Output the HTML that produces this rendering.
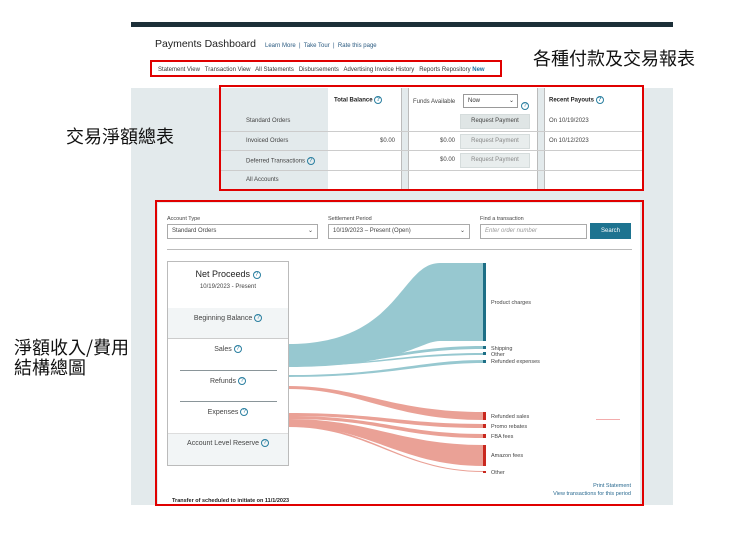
<!DOCTYPE html>
<html><head><meta charset="utf-8"><style>
*{margin:0;padding:0;box-sizing:border-box}
body{width:740px;height:543px;background:#fff;position:relative;overflow:hidden;font-family:"Liberation Sans","Noto Sans CJK TC",sans-serif;color:#333}
.a{position:absolute}
.t{font-size:6px;color:#444;white-space:nowrap}
.cjk{font-family:"Noto Sans CJK TC",sans-serif;font-size:18px;color:#111;position:absolute;white-space:nowrap;line-height:1.1}
.red{position:absolute;border:2px solid #e00000}
.q{display:inline-block;width:8px;height:8px;border:1px solid #2a7fa0;border-radius:50%;font-size:6px;line-height:6px;text-align:center;color:#2a7fa0;vertical-align:middle}
.btn{position:absolute;background:#e8eded;border:1px solid #d5dcdc;font-size:6px;color:#888;text-align:center;line-height:13px}
</style></head><body>
<div class="a" style="left:131px;top:22px;width:542px;height:5px;background:#1c2f38"></div>
<div class="a" style="left:131px;top:27px;width:542px;height:61px;background:#fff"></div>
<div class="a" style="left:131px;top:88px;width:542px;height:417px;background:#e3eaec"></div>
<div class="a" style="left:155px;top:38px;font-size:10.5px;color:#222">Payments Dashboard</div>
<div class="a t" style="left:265px;top:43px;color:#2a5a80">Learn More &nbsp;|&nbsp; Take Tour &nbsp;|&nbsp; Rate this page</div>
<div class="a t" style="left:158px;top:67px;color:#333">Statement View &nbsp; Transaction View &nbsp; All Statements &nbsp; Disbursements &nbsp; Advertising Invoice History &nbsp; Reports Repository <b style="color:#1a6fa0">New</b></div>
<div class="red" style="left:150px;top:60px;width:352px;height:17px"></div>
<div class="cjk" style="left:533px;top:49px">各種付款及交易報表</div>
<div class="cjk" style="left:66px;top:127px">交易淨額總表</div>
<div class="cjk" style="left:14px;top:338px">淨額收入/費用<br>結構總圖</div>
<div class="a" style="left:328px;top:88px;width:74px;height:102px;background:#fff;border-right:1px solid #bbb"></div>
<div class="a" style="left:408px;top:88px;width:130px;height:102px;background:#fff;border-left:1px solid #bbb;border-right:1px solid #bbb"></div>
<div class="a" style="left:544px;top:88px;width:99px;height:102px;background:#fff;border-left:1px solid #bbb"></div>
<div class="a" style="left:220px;top:131px;width:423px;height:1px;background:#ccc"></div>
<div class="a" style="left:220px;top:150px;width:423px;height:1px;background:#ccc"></div>
<div class="a" style="left:220px;top:170px;width:423px;height:1px;background:#ccc"></div>
<div class="a t" style="left:334px;top:96px;font-weight:bold;color:#222">Total Balance <span class="q">?</span></div>
<div class="a t" style="left:413px;top:99px">Funds Available</div>
<div class="a" style="left:463px;top:94px;width:55px;height:14px;border:1px solid #999;background:#fff;font-size:6px;line-height:12px;padding-left:4px">Now<span style="float:right;margin-right:3px">⌄</span></div>
<div class="a" style="left:521px;top:97px"><span class="q">?</span></div>
<div class="a t" style="left:549px;top:96px;font-weight:bold;color:#222">Recent Payouts <span class="q">?</span></div>
<div class="a t" style="left:246px;top:118px">Standard Orders</div>
<div class="a t" style="left:246px;top:138px">Invoiced Orders</div>
<div class="a t" style="left:246px;top:157px">Deferred Transactions <span class="q">?</span></div>
<div class="a t" style="left:246px;top:177px">All Accounts</div>
<div class="a t" style="left:380px;top:138px">$0.00</div>
<div class="a t" style="left:440px;top:138px">$0.00</div>
<div class="a t" style="left:440px;top:157px">$0.00</div>
<div class="btn" style="left:460px;top:114px;width:70px;height:15px;background:#dfe5e5;color:#444">Request Payment</div>
<div class="btn" style="left:460px;top:134px;width:70px;height:15px">Request Payment</div>
<div class="btn" style="left:460px;top:153px;width:70px;height:15px">Request Payment</div>
<div class="a t" style="left:549px;top:118px">On 10/19/2023</div>
<div class="a t" style="left:549px;top:138px">On 10/12/2023</div>
<div class="red" style="left:219px;top:85px;width:425px;height:106px"></div>
<div class="a" style="left:158px;top:203px;width:482px;height:302px;background:#fff"></div>
<div class="a t" style="left:167px;top:216px;font-size:5.5px">Account Type</div>
<div class="a t" style="left:328px;top:216px;font-size:5.5px">Settlement Period</div>
<div class="a t" style="left:480px;top:216px;font-size:5.5px">Find a transaction</div>
<div class="a t" style="left:167px;top:224px;width:151px;height:15px;border:1px solid #aaa;line-height:13px;padding-left:4px">Standard Orders<span style="float:right;margin-right:4px">⌄</span></div>
<div class="a t" style="left:328px;top:224px;width:142px;height:15px;border:1px solid #aaa;line-height:13px;padding-left:4px">10/19/2023 – Present (Open)<span style="float:right;margin-right:4px">⌄</span></div>
<div class="a t" style="left:480px;top:224px;width:107px;height:15px;border:1px solid #aaa;line-height:13px;padding-left:4px;font-style:italic;color:#999">Enter order number</div>
<div class="a" style="left:590px;top:223px;width:41px;height:16px;background:#1d7390;color:#fff;font-size:6px;text-align:center;line-height:16px">Search</div>
<div class="a" style="left:167px;top:249px;width:465px;height:1px;background:#bbb"></div>
<div class="a" style="left:167px;top:261px;width:122px;height:205px;border:1px solid #bbb;background:#fff"></div>
<div class="a" style="left:168px;top:308px;width:120px;height:31px;background:#f2f5f6;border-bottom:1px solid #ccc"></div>
<div class="a" style="left:168px;top:433px;width:120px;height:32px;background:#f2f5f6;border-top:1px solid #ddd"></div>
<div class="a" style="left:180px;top:370px;width:97px;height:1px;background:#8a9599"></div>
<div class="a" style="left:180px;top:401px;width:97px;height:1px;background:#8a9599"></div>
<div class="a" style="left:168px;top:269px;width:120px;text-align:center;font-size:9px;color:#222">Net Proceeds <span class="q">?</span></div>
<div class="a t" style="left:168px;top:284px;width:120px;text-align:center">10/19/2023 - Present</div>
<div class="a t" style="left:168px;top:314px;width:120px;text-align:center;font-size:7px">Beginning Balance <span class="q">?</span></div>
<div class="a t" style="left:168px;top:345px;width:120px;text-align:center;font-size:7px">Sales <span class="q">?</span></div>
<div class="a t" style="left:168px;top:377px;width:120px;text-align:center;font-size:7px">Refunds <span class="q">?</span></div>
<div class="a t" style="left:168px;top:408px;width:120px;text-align:center;font-size:7px">Expenses <span class="q">?</span></div>
<div class="a t" style="left:168px;top:439px;width:120px;text-align:center;font-size:7px">Account Level Reserve <span class="q">?</span></div>
<svg class="a" style="left:0;top:0" width="740" height="543">
<g fill="#97c8d0">
<path d="M289 344 C400 344 400 263 440 263 L484 263 L484 341 L440 341 C420 341 400 367 289 367 Z"/>
<path d="M289 364 C380 364 400 346 484 346 L484 349 C400 349 380 366 289 366Z"/>
<path d="M289 365 C380 365 400 353 484 353 L484 355 C400 355 380 366 289 366Z"/>
<path d="M289 375 C390 375 420 360 484 360 L484 363 C420 363 390 377 289 377Z"/>
</g>
<g fill="#eaa196">
<path d="M289 386 C360 386 390 412 484 412 L484 420 C390 420 360 389 289 389Z"/>
<path d="M289 413 C380 413 400 424 484 424 L484 428 C400 428 380 416 289 416Z"/>
<path d="M289 416 C380 416 400 434 484 434 L484 438 C400 438 380 419 289 419Z"/>
<path d="M289 419 C370 419 400 445 484 445 L484 466 C400 466 370 426 289 426Z"/>
<path d="M289 425 C370 425 400 471 484 471 L484 472 C400 472 370 427 289 427Z"/>
</g>
<g fill="#1d6f86"><rect x="483" y="263" width="3" height="78"/><rect x="483" y="346" width="3" height="3"/><rect x="483" y="352" width="3" height="3"/><rect x="483" y="360" width="3" height="3"/></g>
<g fill="#c9281e"><rect x="483" y="412" width="3" height="8"/><rect x="483" y="424" width="3" height="4"/><rect x="483" y="434" width="3" height="4"/><rect x="483" y="445" width="3" height="21"/><rect x="483" y="471" width="3" height="2"/></g>
<g font-size="5.5" fill="#444" font-family="Liberation Sans">
<text x="491" y="304">Product charges</text><text x="491" y="350">Shipping</text><text x="491" y="356">Other</text><text x="491" y="363">Refunded expenses</text>
<text x="491" y="418">Refunded sales</text><text x="491" y="428">Promo rebates</text><text x="491" y="438">FBA fees</text><text x="491" y="457">Amazon fees</text><text x="491" y="474">Other</text>
<text x="631" y="487" text-anchor="end" fill="#2a6a90">Print Statement</text><text x="631" y="495" text-anchor="end" fill="#2a6a90">View transactions for this period</text>
<text x="172" y="502" font-weight="bold" fill="#222">Transfer of          scheduled to initiate on 11/1/2023</text>
</g>
<rect x="596" y="419" width="24" height="0.7" fill="#e88"/>
</svg>
<div class="red" style="left:155px;top:200px;width:489px;height:306px"></div>
</body></html>
